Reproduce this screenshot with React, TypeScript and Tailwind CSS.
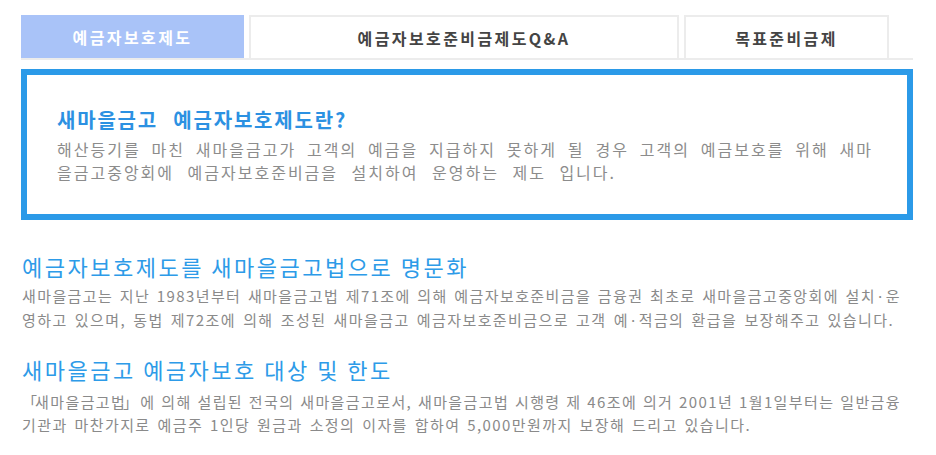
import type { ReactNode } from "react"

const tabs = [
  { label: "예금자보호제도", active: true, width: "w-[223px]" },
  { label: "예금자보호준비금제도Q&A", active: false, width: "w-[430px]" },
  { label: "목표준비금제", active: false, width: "w-[205px]" },
]

// 줄마다 폭을 고정해 양쪽 정렬
function Line({ children, width }: { children: ReactNode; width: string }) {
  return <span className={`block ${width} whitespace-nowrap text-justify [text-align-last:justify]`}>{children}</span>
}

export default function App() {
  return (
    <div className="w-[936px] h-[455px] bg-white overflow-hidden font-['Noto_Sans_CJK_KR','Noto_Sans',sans-serif]">
      <div className="pl-[21px] pt-[15px] w-[913px]">
        {/* 탭 */}
        <div className="flex gap-[5px] border-b-2 border-[#ececec]">
          {tabs.map((tab) => (
            <div
              key={tab.label}
              className={`${tab.width} h-[43px] flex items-center justify-center text-[16px] font-bold tracking-[2.4px] ${
                tab.active
                  ? "bg-[#a9c3f8] text-white"
                  : "bg-white text-[#444] border-t-2 border-x-2 border-[#ececec]"
              }`}
            >
              {tab.label}
            </div>
          ))}
        </div>

        {/* 안내 박스 */}
        <div className="mt-[9px] border-[6px] border-[#2b9ae8] h-[151px] pl-[30px] pt-[32px]">
          <h2 className="text-[20px] leading-[26px] font-bold text-[#2c91e2] tracking-[1.8px]">
            <Line width="w-[290px]">새마을금고 예금자보호제도란?</Line>
          </h2>
          <p className="mt-[5px] text-[16px] leading-[23px] text-[#8c8c8c] tracking-[2px]">
            <Line width="w-[816px]">
              해산등기를 마친 새마을금고가 고객의 예금을 지급하지 못하게 될 경우 고객의 예금보호를 위해 새마
            </Line>
            <Line width="w-[559px]">을금고중앙회에 예금자보호준비금을 설치하여 운영하는 제도 입니다.</Line>
          </p>
        </div>

        {/* 명문화 */}
        <div className="mt-[31px] pl-[1px]">
          <h3 className="text-[22px] leading-[30px] text-[#2d9be8] tracking-[2.5px]">
            <Line width="w-[441px]">예금자보호제도를 새마을금고법으로 명문화</Line>
          </h3>
          <p className="mt-[3px] text-[15px] leading-[24px] text-[#8a8a8a] tracking-[1.4px]">
            <Line width="w-[879px]">
              새마을금고는 지난 1983년부터 새마을금고법 제71조에 의해 예금자보호준비금을 금융권 최초로 새마을금고중앙회에 설치·운
            </Line>
            <Line width="w-[872px]">
              영하고 있으며, 동법 제72조에 의해 조성된 새마을금고 예금자보호준비금으로 고객 예·적금의 환급을 보장해주고 있습니다.
            </Line>
          </p>
        </div>

        {/* 대상 및 한도 */}
        <div className="mt-[22px] pl-[1px]">
          <h3 className="text-[22px] leading-[30px] text-[#2d9be8] tracking-[2.5px]">
            <Line width="w-[363px]">새마을금고 예금자보호 대상 및 한도</Line>
          </h3>
          <p className="mt-[6px] text-[15px] leading-[23px] text-[#8a8a8a] tracking-[1.4px]">
            <Line width="w-[879px]">
              <span className="tracking-[-3px]">「</span>새마을금고<span className="tracking-[-3px]">법</span>」에 의해
              설립된 전국의 새마을금고로서, 새마을금고법 시행령 제 46조에 의거 2001년 1월1일부터는 일반금융
            </Line>
            <Line width="w-[729px]">
              기관과 마찬가지로 예금주 1인당 원금과 소정의 이자를 합하여 5,000만원까지 보장해 드리고 있습니다.
            </Line>
          </p>
        </div>
      </div>
    </div>
  )
}
